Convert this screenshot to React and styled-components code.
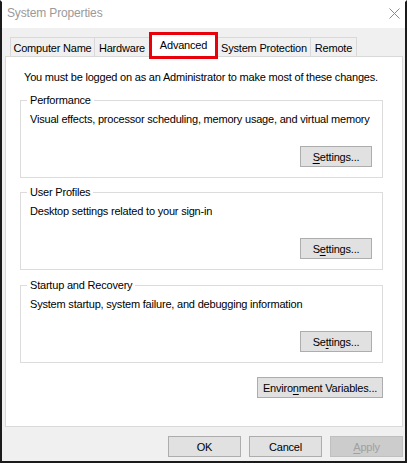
import React from "react";
import styled, { createGlobalStyle } from "styled-components";

const Global = createGlobalStyle`
  html, body { margin: 0; padding: 0; background: #fff; }
  body {
    font-family: "Liberation Sans", Arial, sans-serif;
    font-size: 11px;
    letter-spacing: -0.2px;
    color: #000;
  }
`;

const Window = styled.div`
  width: 407px;
  height: 463px;
  box-sizing: border-box;
  border: 2px solid #1b1b1b;
  border-top-color: #ffffff;
  display: flex;
  flex-direction: column;
  background: #f0f0f0;
  overflow: hidden;
`;

const TitleBar = styled.div`
  height: 26px;
  box-sizing: border-box;
  background: #fff;
  display: flex;
  align-items: center;
  justify-content: space-between;
  padding: 0 0 4px 5px;
  flex-shrink: 0;
`;

const Title = styled.span`
  color: #9a9a9a;
  font-size: 12px;
  letter-spacing: -0.15px;
`;

const CloseBtn = styled.span`
  display: flex;
  align-items: center;
  justify-content: center;
  width: 18px;
  height: 18px;
  margin-right: 2px;
`;

const Body = styled.div`
  flex: 1;
  display: flex;
  flex-direction: column;
  padding: 0 2px 0 3px;
`;

const TabStrip = styled.div`
  display: flex;
  align-items: flex-end;
  height: 29px;
  padding-left: 5px;
  position: relative;
  z-index: 2;
  margin-bottom: -1px;
`;

const Tab = styled.div`
  position: relative;
  box-sizing: border-box;
  width: ${(p) => p.$w}px;
  height: ${(p) => (p.$active ? 23 : 20)}px;
  z-index: ${(p) => (p.$active ? 2 : 1)};
  border: 1px solid #d9d9d9;
  border-left-width: ${(p) => (p.$first || p.$active ? 1 : 0)}px;
  border-right-width: ${(p) => (p.$beforeActive ? 0 : 1)}px;
  border-bottom: ${(p) => (p.$active ? "none" : "1px solid #d9d9d9")};
  background: ${(p) => (p.$active ? "#fff" : "#f0f0f0")};
  display: flex;
  align-items: center;
  justify-content: center;
  padding-top: ${(p) => (p.$active ? 0 : 1)}px;
  padding-bottom: ${(p) => (p.$active ? 2 : 0)}px;
  white-space: nowrap;
`;

const Highlight = styled.div`
  position: absolute;
  left: -1px;
  right: -1px;
  top: -3px;
  bottom: -2px;
  border: 3px solid #e8000b;
  pointer-events: none;
`;

const Panel = styled.div`
  height: 371px;
  box-sizing: border-box;
  background: #fff;
  border: 1px solid #d9d9d9;
  padding: 12px 19px 0 14px;
  display: flex;
  flex-direction: column;
`;

const Intro = styled.div`
  line-height: 16px;
  padding-left: 4px;
  white-space: nowrap;
  margin-bottom: 7px;
`;

const Group = styled.fieldset`
  margin: ${(p) => p.$mt || 0}px 0 0 0;
  padding: 0 10px 10px 9px;
  border: 1px solid #dcdcdc;
  min-width: 0;
  display: flex;
  flex-direction: column;
`;

const Legend = styled.legend`
  padding: 0 3px;
  margin-left: -3px;
  line-height: 16px;
`;

const Desc = styled.div`
  line-height: 16px;
  margin-top: 3px;
  white-space: nowrap;
`;

const Button = styled.button`
  font: inherit;
  letter-spacing: -0.2px;
  color: ${(p) => (p.disabled ? "#a0a0a0" : "#000")};
  background: ${(p) => (p.disabled ? "#cccccc" : "#e1e1e1")};
  border: 1px solid ${(p) => (p.disabled ? "#bfbfbf" : "#adadad")};
  width: ${(p) => p.$w || 72}px;
  height: 21px;
  padding: 0;
  margin: 0;
  box-sizing: border-box;
  display: flex;
  align-items: center;
  justify-content: center;
  align-self: flex-end;
  margin-top: ${(p) => p.$mt || 0}px;
  white-space: nowrap;
`;

const U = styled.span`
  text-decoration: underline;
  text-underline-offset: 2px;
`;

const Footer = styled.div`
  display: flex;
  justify-content: flex-end;
  gap: 8px;
  margin-top: 9px;
`;

export default function App() {
  return (
    <>
      <Global />
      <Window>
        <TitleBar>
          <Title>System Properties</Title>
          <CloseBtn>
            <svg width="11" height="11" viewBox="0 0 11 11">
              <path d="M0.5 0.5 L10.5 10.5 M10.5 0.5 L0.5 10.5" stroke="#8a8a8a" strokeWidth="1" fill="none" />
            </svg>
          </CloseBtn>
        </TitleBar>
        <Body>
          <TabStrip>
            <Tab $w={85} $first>Computer Name</Tab>
            <Tab $w={54} $beforeActive>Hardware</Tab>
            <Tab $w={69} $active>
              Advanced
              <Highlight />
            </Tab>
            <Tab $w={93}>System Protection</Tab>
            <Tab $w={46}>Remote</Tab>
          </TabStrip>
          <Panel>
            <Intro>You must be logged on as an Administrator to make most of these changes.</Intro>
            <Group>
              <Legend>Performance</Legend>
              <Desc>Visual effects, processor scheduling, memory usage, and virtual memory</Desc>
              <Button $mt={19}>
                <U>S</U>ettings...
              </Button>
            </Group>
            <Group $mt={6}>
              <Legend>User Profiles</Legend>
              <Desc>Desktop settings related to your sign-in</Desc>
              <Button $mt={19}>
                S<U>e</U>ttings...
              </Button>
            </Group>
            <Group $mt={7}>
              <Legend>Startup and Recovery</Legend>
              <Desc>System startup, system failure, and debugging information</Desc>
              <Button $mt={19}>
                Se<U>t</U>tings...
              </Button>
            </Group>
            <Button $w={126} $mt={14}>
              Enviro<U>n</U>ment Variables...
            </Button>
          </Panel>
          <Footer>
            <Button $w={73}>OK</Button>
            <Button $w={73}>Cancel</Button>
            <Button $w={73} disabled>
              <U>A</U>pply
            </Button>
          </Footer>
        </Body>
      </Window>
    </>
  );
}
